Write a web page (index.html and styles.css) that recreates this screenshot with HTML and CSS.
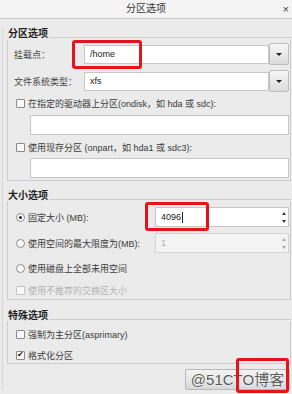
FILE: index.html
```html
<!doctype html>
<html lang="zh-CN">
<head>
    <meta charset="UTF-8">
    <title>分区选项</title>
    <link rel="stylesheet" href="styles.css">
</head>
<body>
<div class="dialog">
    <div class="titlebar">
        <span class="title">分区选项</span>
        <span class="close">×</span>
    </div>
    <div class="content">
        <!-- 分区选项 -->
        <div class="legend"><span>分区选项</span><i></i></div>
        <div class="frame f1">
            <div class="field">
                <span class="lab">挂载点：</span>
                <div class="combo"><div class="entry">/home</div><div class="drop"><b></b></div></div>
            </div>
            <div class="field f-fs">
                <span class="lab">文件系统类型：</span>
                <div class="combo"><div class="entry">xfs</div><div class="drop"><b></b></div></div>
            </div>
            <div class="opt o-disk"><span class="chk"></span>在指定的驱动器上分区(ondisk，如 hda 或 sdc):</div>
            <div class="entry wide"></div>
            <div class="opt o-part"><span class="chk"></span>使用现存分区 (onpart，如 hda1 或 sdc3):</div>
            <div class="entry wide w2"></div>
        </div>
        <!-- 大小选项 -->
        <div class="legend l2"><span>大小选项</span><i></i></div>
        <div class="frame f2">
            <div class="field">
                <span class="opt"><span class="radio on"></span>固定大小 (MB):</span>
                <div class="spin"><div class="entry">4096<em class="caret"></em></div><div class="arrows"><b class="up"></b><b class="down"></b></div></div>
            </div>
            <div class="field f-max">
                <span class="opt"><span class="radio"></span>使用空间的最大限度为(MB):</span>
                <div class="spin off"><div class="entry">1</div><div class="arrows"><b class="up"></b><b class="down"></b></div></div>
            </div>
            <div class="opt o-all"><span class="radio"></span>使用磁盘上全部未用空间</div>
            <div class="opt o-swap off"><span class="chk"></span>使用不推荐的交换区大小</div>
        </div>
        <!-- 特殊选项 -->
        <div class="legend l3"><span>特殊选项</span><i></i></div>
        <div class="frame f3">
            <div class="opt o-prim"><span class="chk"></span>强制为主分区(asprimary)</div>
            <div class="opt o-fmt"><span class="chk ok">✔</span>格式化分区</div>
        </div>
        <div class="buttons">
            <div class="btn">@51CTO博客</div>
        </div>
    </div>
    <div class="mark m1"></div>
    <div class="mark m2"></div>
    <div class="mark m3"></div>
</div>
</body>
</html>
```

FILE: styles.css
```css
*{
    margin:0;
    padding:0;
    box-sizing:border-box;
}
body{
    background:#ebebeb;
    font-family:"Liberation Sans","Noto Sans CJK SC",sans-serif;
    font-size:9px;
    color:#3a3a3a;
}
.dialog{
    width:292px;
    height:394px;
    position:relative;
    overflow:hidden;
    background:#ebebeb;
}
.titlebar{
    height:19px;
    background:#f4f4f4;
    border-bottom:1px solid #c9c9c9;
    display:flex;
    align-items:center;
    justify-content:center;
    position:relative;
}
.title{
    font-size:10px;
    color:#333;
    line-height:18px;
}
.close{
    position:absolute;
    right:3px;
    top:1px;
    font-size:11px;
    line-height:16px;
    color:#444;
}
.content{
    margin-left:2px;
    border-left:1px solid #d6d6d6;
    padding:0 1px 0 4px;
}
.legend{
    display:flex;
    align-items:flex-end;
    height:12px;
    margin-top:8px;
}
.legend span{
    font-size:10px;
    line-height:11px;
    color:#222;
    font-weight:bold;
    padding:0 1px;
}
.legend i{
    flex:1;
    border-bottom:1px solid #cdcdcd;
    margin-bottom:1px;
}
.l2{
    margin-top:8px;
}
.l3{
    margin-top:9px;
}
.frame{
    border:1px solid #cdcdcd;
    border-top:none;
    padding:4px 1px 2px 6px;
    display:flex;
    flex-direction:column;
}
.field{
    display:flex;
    align-items:center;
    height:22px;
}
.f-fs{
    margin-top:5px;
}
.lab{
    width:70px;
    color:#444;
}
.combo{
    flex:1;
    display:flex;
    height:22px;
}
.entry{
    background:#fff;
    border:1px solid #c6c6c6;
    height:19px;
    line-height:17px;
    padding-left:5px;
    color:#222;
}
.combo .entry{
    flex:1;
    align-self:center;
    height:19px;
}
.drop{
    width:20px;
    border:1px solid #bdbdbd;
    border-radius:2px;
    background:linear-gradient(#f7f7f7,#dcdcdc);
    display:flex;
    align-items:center;
    justify-content:center;
}
.drop b{
    width:0;
    height:0;
    border-left:3px solid transparent;
    border-right:3px solid transparent;
    border-top:3px solid #222;
}
.opt{
    display:flex;
    align-items:center;
    height:14px;
    white-space:nowrap;
    color:#3a3a3a;
}
.f1 .opt{
    padding-left:2px;
}
.o-disk{
    margin-top:4px;
}
.wide{
    margin:5px 0 0 16px;
    height:20px;
}
.o-part{
    margin-top:5px;
}
.w2{
    margin-top:4px;
}
.chk{
    width:9px;
    height:9px;
    border:1px solid #8a8a8a;
    border-radius:1px;
    background:#fafafa;
    margin-right:3px;
    display:inline-flex;
    align-items:center;
    justify-content:center;
    font-size:8px;
    line-height:8px;
    color:#222;
    flex:none;
}
.radio{
    width:9px;
    height:9px;
    border:1px solid #8a8a8a;
    border-radius:50%;
    background:#fafafa;
    margin-right:3px;
    display:inline-flex;
    align-items:center;
    justify-content:center;
    flex:none;
}
.radio.on::after{
    content:"";
    width:3px;
    height:3px;
    border-radius:50%;
    background:#222;
}
.f2{
    padding-top:6px;
    padding-left:8px;
}
.f2 .field{
    height:20px;
}
.f2 .field .opt{
    width:139px;
}
.f-max{
    margin-top:6px;
}
.spin{
    flex:1;
    display:flex;
    height:20px;
}
.spin .entry{
    flex:1;
    height:20px;
    line-height:18px;
    border-right:none;
}
.arrows{
    width:10px;
    background:#fff;
    border:1px solid #c6c6c6;
    border-left:none;
    display:flex;
    flex-direction:column;
    align-items:center;
    justify-content:center;
    gap:5px;
}
.arrows b{
    width:0;
    height:0;
    border-left:2px solid transparent;
    border-right:2px solid transparent;
}
.arrows .up{
    border-bottom:3px solid #333;
}
.arrows .down{
    border-top:3px solid #333;
}
.caret{
    display:inline-block;
    width:1px;
    height:11px;
    background:#222;
    vertical-align:middle;
    margin-left:1px;
}
.spin.off .entry,
.spin.off .arrows{
    background:#f3f3f3;
    color:#aaa;
    border-color:#d4d4d4;
}
.spin.off .up{
    border-bottom-color:#aaa;
}
.spin.off .down{
    border-top-color:#aaa;
}
.o-all{
    margin-top:8px;
}
.o-swap{
    margin-top:8px;
}
.off{
    color:#b4b4b4;
}
.off .chk{
    border-color:#c4c4c4;
}
.f3{
    padding-top:6px;
    padding-left:8px;
    padding-bottom:1px;
}
.o-fmt{
    margin-top:7px;
}
.buttons{
    display:flex;
    justify-content:flex-end;
    margin-top:5px;
    padding-right:1px;
}
.btn{
    width:105px;
    height:21px;
    border:1px solid #b8b8b8;
    border-radius:2px;
    background:linear-gradient(#f4f4f4,#d9d9d9);
    text-align:center;
    font-size:15px;
    line-height:20px;
    color:#5a5a5a;
    text-shadow:0 0 2px #fff,0 0 1px #fff;
    white-space:nowrap;
    overflow:hidden;
}
.mark{
    position:absolute;
    border:3px solid #e5141b;
    border-radius:3px;
}
.m1{
    left:72px;
    top:40px;
    width:70px;
    height:29px;
}
.m2{
    left:145px;
    top:202px;
    width:64px;
    height:29px;
}
.m3{
    left:236px;
    top:358px;
    width:53px;
    height:35px;
}
```
